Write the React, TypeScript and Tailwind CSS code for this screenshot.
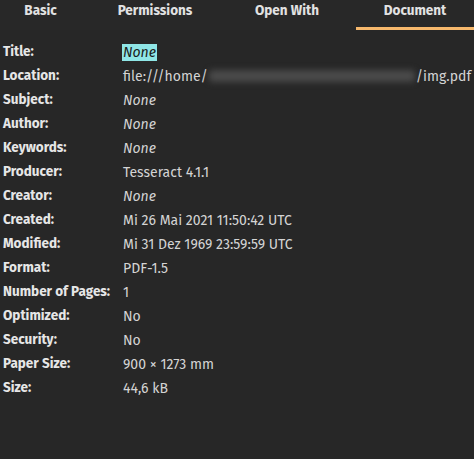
import React from "react";

const rows: { label: string; value: string; italic?: boolean; kind?: string }[] = [
  { label: "Title:", value: "None", italic: true, kind: "hl" },
  { label: "Location:", value: "", kind: "loc" },
  { label: "Subject:", value: "None", italic: true },
  { label: "Author:", value: "None", italic: true },
  { label: "Keywords:", value: "None", italic: true },
  { label: "Producer:", value: "Tesseract 4.1.1" },
  { label: "Creator:", value: "None", italic: true },
  { label: "Created:", value: "Mi 26 Mai 2021 11:50:42 UTC" },
  { label: "Modified:", value: "Mi 31 Dez 1969 23:59:59 UTC" },
  { label: "Format:", value: "PDF-1.5" },
  { label: "Number of Pages:", value: "1" },
  { label: "Optimized:", value: "No" },
  { label: "Security:", value: "No" },
  { label: "Paper Size:", value: "900 × 1273 mm" },
  { label: "Size:", value: "44,6 kB" },
];

export default function App() {
  return (
    <div
      className="w-[474px] h-[459px] bg-[#272727] text-[13.5px] overflow-hidden"
      style={{ fontFamily: '"Fira Sans", "Noto Sans", sans-serif' }}
    >
      <div className="flex h-[30px] bg-[#282828] text-[#e2e2e2] font-bold">
        <div className="ml-[-3px] w-[87px] flex items-center justify-center pb-[8px]">Basic</div>
        <div className="ml-[6px] w-[130px] flex items-center justify-center pb-[8px]">Permissions</div>
        <div className="ml-[7px] w-[120px] flex items-center justify-center pb-[8px]">Open With</div>
        <div className="ml-[9px] w-[118px] flex items-center justify-center pb-[5px] border-b-[3px] border-[#f6b86c]">
          Document
        </div>
      </div>
      <div className="pt-[10px]">
        {rows.map((r) => (
          <div key={r.label} className="flex h-[24px] items-center">
            <div className="w-[123px] pl-[3px] font-bold text-[#e6e6e6]">{r.label}</div>
            <div className={"text-[14px] text-[#d4d4d4] " + (r.italic ? "italic" : "")}>
              {r.kind === "hl" ? (
                <span className="bg-[#8fe6e6] text-[#1a1a1a] px-[1px] ml-[-1px]">{r.value}</span>
              ) : r.kind === "loc" ? (
                <span className="flex items-center">
                  <span>file:///home/</span>
                  <span className="w-[206px] h-[12px] bg-[#4a4a4a] blur-[3px] mx-[1px] rounded-sm" />
                  <span>/img.pdf</span>
                </span>
              ) : (
                r.value
              )}
            </div>
          </div>
        ))}
      </div>
    </div>
  );
}
